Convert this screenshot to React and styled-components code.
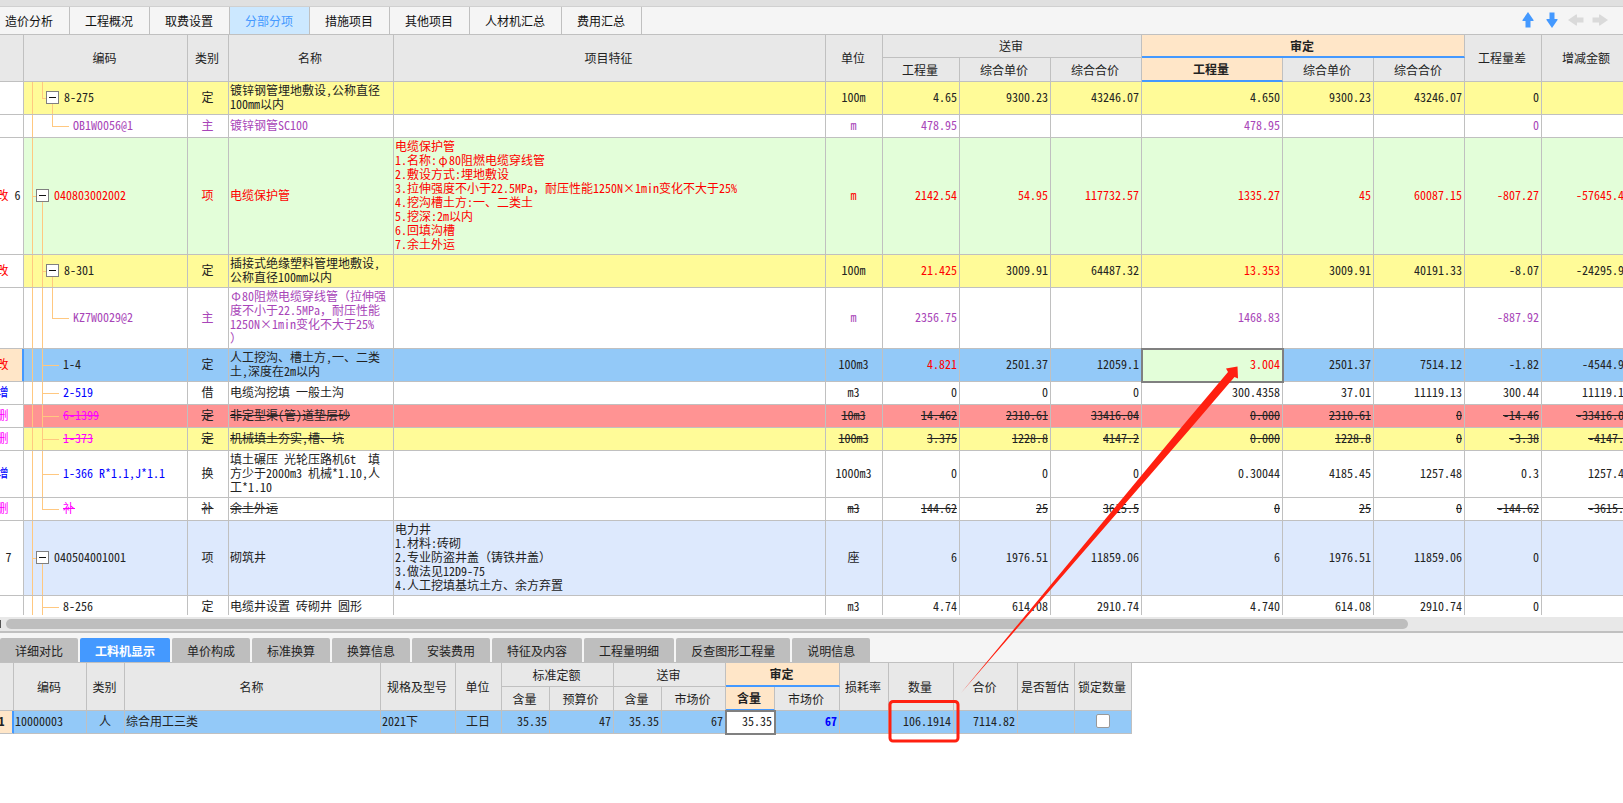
import React from 'react';
import styled, { createGlobalStyle, css } from 'styled-components';

const LINE = '#c0c0c0';
const GUIDE = '#ffc880';
const BLUE = '#4499ff';

const GlobalStyle = createGlobalStyle`
  * {
    box-sizing: border-box;
  }
  body {
    margin: 0;
    background: white;
    color: #222;
    font-family: 'Noto Sans CJK SC', sans-serif;
    font-size: 12px;
    overflow: hidden;
  }
`;

const Page = styled.div`
  display: flex;
  flex-direction: column;
  height: 100vh;
  position: relative;
  overflow: hidden;
`;

const TopStrip = styled.div`
  height: 7px;
  flex: none;
  background: #e0e0e0;
  border-bottom: 1px solid #d0d0d0;
`;

const TabBar = styled.div`
  display: flex;
  flex: none;
  align-items: stretch;
  justify-content: space-between;
  height: 28px;
  background: #f5f5f5;
  border-bottom: 1px solid ${LINE};
`;

/* the strip is scrolled a little, so the first tab is cut */
const TopTabs = styled.nav`
  display: flex;
  margin-left: -10px;
`;

const TopTab = styled.button`
  border: 0;
  border-right: 1px solid ${LINE};
  padding: 0 16px 0 15px;
  background: ${({ $active }) => ($active ? '#cce8ff' : 'transparent')};
  color: ${({ $active }) => ($active ? BLUE : '#111')};
  font: inherit;
`;

const ArrowTools = styled.div`
  display: flex;
  align-items: center;
  gap: 8px;
  padding: 0 15px 1px 0;
`;

const ArrowButton = styled.button`
  display: flex;
  width: 16px;
  height: 16px;
  border: 0;
  padding: 0;
  background: none;
  color: ${({ disabled }) => (disabled ? '#dadada' : BLUE)};
  svg {
    transform: rotate(${({ $turn }) => $turn}deg);
  }
`;

const GridPane = styled.section`
  flex: 1;
  min-height: 0;
  overflow: hidden;
  border-bottom: 2px solid white;
`;

const Grid = styled.table`
  table-layout: fixed;
  border-collapse: separate;
  border-spacing: 0;
  font-family: 'Noto Sans Mono CJK SC', 'Noto Sans CJK SC', monospace;
  line-height: 14px;
`;

const MainGrid = styled(Grid)`
  width: calc(100% + 16px);
  margin-left: -6px;
`;

const DetailGrid = styled(Grid)`
  width: 1142px;
  margin-left: -10px;
`;

const Head = styled.th`
  height: ${({ $short }) => ($short ? 23 : 24)}px;
  padding: 0 2px 0 0;
  background: ${({ $current }) => ($current ? '#ffe6c8' : '#e8e8e8')};
  border-right: 1px solid ${LINE};
  border-bottom: ${({ $mark }) => ($mark ? `2px solid ${BLUE}` : `1px solid ${LINE}`)};
  font-weight: ${({ $current }) => ($current ? 700 : 400)};
  white-space: nowrap;
`;

const Row = styled.tr`
  background: ${({ $bg }) => $bg || 'white'};
  color: ${({ $color }) => $color || 'inherit'};
  td:not(:first-child) {
    text-decoration: ${({ $removed }) => ($removed ? 'line-through' : 'none')};
  }
`;

const Cell = styled.td`
  height: 23px;
  padding: 1px 2px 3px 1px;
  border-right: 1px solid ${LINE};
  border-bottom: 1px solid ${LINE};
  text-align: ${({ $align }) => $align || 'left'};
  white-space: pre;
  overflow: hidden;
  color: ${({ $color }) => $color || 'inherit'};
  font-weight: ${({ $bold }) => ($bold ? 700 : 400)};
  ${({ $editing }) =>
    $editing &&
    css`
      background: ${$editing};
      outline: 2px solid #808080;
      outline-offset: -1px;
    `}
`;

const Gutter = styled(Cell)`
  padding: 1px 0 3px;
  background: ${({ $selected }) => ($selected ? '#ffe6c8' : 'white')};
  box-shadow: ${({ $selected }) => ($selected ? `inset -1px 0 ${BLUE}` : 'none')};
  border-right-color: ${({ $selected }) => ($selected ? BLUE : LINE)};
  text-align: center;
`;

const Mark = styled.span`
  color: ${({ $color }) => $color};
`;

const RowNo = styled.span`
  color: #222;
`;

// greek letters take a full character cell
const WideGlyph = styled.span`
  display: inline-block;
  width: 12px;
  text-align: center;
`;

const vLine = (level, part) => {
  const y = part === 'bottom' ? '100%' : '0';
  const h = part === 'full' ? '100%' : '50%';
  return `linear-gradient(${GUIDE}, ${GUIDE}) ${8 + level * 10}px ${y} / 1px ${h} no-repeat`;
};

const hLine = (level, width) =>
  `linear-gradient(${GUIDE}, ${GUIDE}) ${8 + level * 10}px 50% / ${width}px 1px no-repeat`;

const TreeCell = styled(Cell)`
  background: ${({ $guides }) => $guides};
`;

const TreeNode = styled.div`
  display: flex;
  align-items: center;
  gap: 5px;
  padding-left: ${({ $indent }) => $indent}px;
`;

const Expander = styled.button`
  width: 13px;
  height: 13px;
  padding: 0;
  display: grid;
  place-items: center;
  background: white;
  border: 1px solid #808080;
  &::before {
    content: '';
    width: 7px;
    height: 1px;
    background: #111;
  }
`;

const ScrollBar = styled.div`
  flex: none;
  display: flex;
  align-items: center;
  gap: 5px;
  height: 16px;
  background: #e8e8e8;
  border-bottom: 2px solid ${LINE};
`;

const ScrollEnd = styled.span`
  width: 1px;
  height: 8px;
  background: #555;
`;

const ScrollThumb = styled.span`
  width: 86.4%;
  height: 10px;
  border-radius: 5px;
  background: #bebebe;
`;

const DetailPane = styled.section`
  flex: 0 0 170px;
  overflow: hidden;
`;

const DetailTabs = styled.nav`
  display: flex;
  align-items: flex-end;
  gap: 2px;
  height: 30px;
  background: #f5f5f5;
  border-bottom: 1px solid ${LINE};
`;

const DetailTab = styled.button`
  height: 24px;
  border: 0;
  border-radius: 2px 2px 0 0;
  padding: 0 15px;
  background: ${({ $active }) => ($active ? BLUE : '#bebebe')};
  color: ${({ $active }) => ($active ? 'white' : '#222')};
  font: inherit;
  font-weight: ${({ $active }) => ($active ? 700 : 400)};
`;

const CheckBox = styled.input`
  appearance: none;
  display: block;
  width: 14px;
  height: 14px;
  margin: 0 auto;
  background: white;
  border: 1px solid #999;
  border-radius: 2px;
`;

const Marks = styled.svg`
  position: absolute;
  left: 0;
  top: 0;
  pointer-events: none;
`;

const topTabs = [
  '造价分析', '工程概况', '取费设置', '分部分项', '措施项目', '其他项目', '人材机汇总', '费用汇总',
];

const detailTabs = [
  '详细对比', '工料机显示', '单价构成', '标准换算', '换算信息', '安装费用', '特征及内容', '工程量明细',
  '反查图形工程量', '说明信息',
];

const mainCols = [30, 164, 41, 165, null, 57, 77, 91, 91, 141, 91, 91, 77, 91];
const detailCols = [24, 73, 38, 256, 75, 46, 48, 64, 48, 64, 49, 65, 49, 65, 64, 57, 57];

const YELLOW = '#fffb98';
const PURPLE = '#a845b8';
const MAGENTA = '#ff00ff';

// guide lines of a direct child that has no children of its own
const leaf = [vLine(0, 'full'), vLine(1, 'full'), hLine(1, 17)].join(', ');
const lastLeaf = [vLine(0, 'full'), vLine(1, 'top'), hLine(1, 17)].join(', ');
const root = [vLine(0, 'full'), hLine(0, 5), vLine(1, 'bottom')].join(', ');

const rows = [
  {
    mark: '', code: '8-275', open: true, indent: 21, kind: '定', bg: YELLOW,
    guides: [vLine(0, 'full'), vLine(1, 'top'), hLine(1, 5), vLine(2, 'bottom')].join(', '),
    name: '镀锌钢管埋地敷设,公称直径\n100mm以内', unit: '100m',
    values: ['4.65', '9300.23', '43246.07', '4.650', '9300.23', '43246.07', '0', '0'],
  },
  {
    mark: '', code: 'OB1W0056@1', indent: 48, kind: '主', color: PURPLE,
    guides: [vLine(0, 'full'), vLine(2, 'top'), hLine(2, 17)].join(', '),
    name: '镀锌钢管SC100', unit: 'm',
    values: ['478.95', '', '', '478.95', '', '', '0', ''],
  },
  {
    mark: '改', no: ' 6', code: '040803002002', open: true, indent: 11, kind: '项', bg: '#e3fed9', color: 'red',
    guides: root,
    name: '电缆保护管', unit: 'm',
    feature:
      '电缆保护管\n1.名称:φ80阻燃电缆穿线管\n2.敷设方式:埋地敷设\n3.拉伸强度不小于22.5MPa，耐压性能1250N×1min变化不大于25%\n4.挖沟槽土方:一、二类土\n5.挖深:2m以内\n6.回填沟槽\n7.余土外运',
    values: ['2142.54', '54.95', '117732.57', '1335.27', '45', '60087.15', '-807.27', '-57645.42'],
  },
  {
    mark: '改', code: '8-301', open: true, indent: 21, kind: '定', bg: YELLOW, changed: true,
    guides: [vLine(0, 'full'), vLine(1, 'full'), hLine(1, 5), vLine(2, 'bottom')].join(', '),
    name: '插接式绝缘塑料管埋地敷设,\n公称直径100mm以内', unit: '100m',
    values: ['21.425', '3009.91', '64487.32', '13.353', '3009.91', '40191.33', '-8.07', '-24295.99'],
  },
  {
    mark: '', code: 'KZ7W0029@2', indent: 48, kind: '主', color: PURPLE,
    guides: [vLine(0, 'full'), vLine(1, 'full'), vLine(2, 'top'), hLine(2, 17)].join(', '),
    name: 'Φ80阻燃电缆穿线管（拉伸强\n度不小于22.5MPa，耐压性能\n1250N×1min变化不大于25%\n）', unit: 'm',
    values: ['2356.75', '', '', '1468.83', '', '', '-887.92', ''],
  },
  {
    mark: '改', code: '1-4', indent: 38, kind: '定', bg: '#93c9f8', changed: true, selected: true, guides: leaf,
    name: '人工挖沟、槽土方,一、二类\n土,深度在2m以内', unit: '100m3',
    values: ['4.821', '2501.37', '12059.1', '3.004', '2501.37', '7514.12', '-1.82', '-4544.98'],
  },
  {
    mark: '增', code: '2-519', indent: 38, kind: '借', markColor: 'blue', guides: leaf,
    name: '电缆沟挖填 一般土沟', unit: 'm3',
    values: ['0', '0', '0', '300.4358', '37.01', '11119.13', '300.44', '11119.13'],
  },
  {
    mark: '删', code: '6-1399', indent: 38, kind: '定', bg: '#ff9393', markColor: MAGENTA, removed: true, guides: leaf,
    name: '非定型渠(管)道垫层砂', unit: '10m3',
    values: ['14.462', '2310.61', '33416.04', '0.000', '2310.61', '0', '-14.46', '-33416.04'],
  },
  {
    mark: '删', code: '1-373', indent: 38, kind: '定', bg: YELLOW, markColor: MAGENTA, removed: true, guides: leaf,
    name: '机械填土夯实,槽、坑', unit: '100m3',
    values: ['3.375', '1228.8', '4147.2', '0.000', '1228.8', '0', '-3.38', '-4147.2'],
  },
  {
    mark: '增', code: '1-366 R*1.1,J*1.1', indent: 38, kind: '换', markColor: 'blue', guides: leaf,
    name: '填土碾压 光轮压路机6t  填\n方少于2000m3 机械*1.10,人\n工*1.10', unit: '1000m3',
    values: ['0', '0', '0', '0.30044', '4185.45', '1257.48', '0.3', '1257.48'],
  },
  {
    mark: '删', code: '补', indent: 38, kind: '补', markColor: MAGENTA, removed: true, guides: lastLeaf,
    name: '余土外运', unit: 'm3',
    values: ['144.62', '25', '3615.5', '0', '25', '0', '-144.62', '-3615.5'],
  },
  {
    mark: '', no: '7', code: '040504001001', open: true, indent: 11, kind: '项', bg: '#dde9fd', guides: root,
    name: '砌筑井', unit: '座',
    feature: '电力井\n1.材料:砖砌\n2.专业防盗井盖（铸铁井盖）\n3.做法见12D9-75\n4.人工挖填基坑土方、余方弃置',
    values: ['6', '1976.51', '11859.06', '6', '1976.51', '11859.06', '0', '0'],
  },
  {
    mark: '', code: '8-256', indent: 38, kind: '定', guides: leaf,
    name: '电缆井设置 砖砌井 圆形', unit: 'm3',
    values: ['4.74', '614.08', '2910.74', '4.740', '614.08', '2910.74', '0', '0'],
  },
];

function Cols({ widths }) {
  return (
    <colgroup>
      {widths.map((width, i) => (
        <col key={i} width={width || undefined} />
      ))}
    </colgroup>
  );
}

function ArrowIcon() {
  return (
    <svg width='16' height='16' viewBox='0 0 16 16' fill='currentColor'>
      <path d='M8 0 L13.5 8 V9 H10.5 V15.5 H5.5 V9 H2.5 V8 Z' />
    </svg>
  );
}

function Description({ text = '' }) {
  return text
    .split(/([φΦ])/)
    .map((part, i) => (i % 2 ? <WideGlyph key={i}>{part}</WideGlyph> : part));
}

function MainRow({ row }) {
  return (
    <Row $bg={row.bg} $color={row.color} $removed={row.removed}>
      <Gutter $selected={row.selected}>
        {row.mark && <Mark $color={row.markColor || 'red'}>{row.mark}</Mark>}
        {row.no ? <RowNo>{row.no}</RowNo> : row.mark && '  '}
      </Gutter>
      <TreeCell $guides={row.guides} $color={row.markColor}>
        <TreeNode $indent={row.indent}>
          {row.open && <Expander aria-label='折叠' />}
          {row.code}
        </TreeNode>
      </TreeCell>
      <Cell $align='center'>{row.kind}</Cell>
      <Cell>
        <Description text={row.name} />
      </Cell>
      <Cell>
        <Description text={row.feature} />
      </Cell>
      <Cell $align='center'>{row.unit}</Cell>
      {row.values.map((value, i) => (
        <Cell
          key={i}
          $align='right'
          $color={row.changed && (i === 0 || i === 3) ? 'red' : undefined}
          $editing={row.selected && i === 3 ? '#e3fed9' : undefined}
        >
          {value}
        </Cell>
      ))}
    </Row>
  );
}

export default function App() {
  return (
    <Page>
      <GlobalStyle />
      <TopStrip />
      <TabBar>
        <TopTabs>
          {topTabs.map((tab) => (
            <TopTab key={tab} $active={tab === '分部分项'}>
              {tab}
            </TopTab>
          ))}
        </TopTabs>
        <ArrowTools>
          <ArrowButton aria-label='上移' $turn={0}>
            <ArrowIcon />
          </ArrowButton>
          <ArrowButton aria-label='下移' $turn={180}>
            <ArrowIcon />
          </ArrowButton>
          <ArrowButton aria-label='后退' $turn={-90} disabled>
            <ArrowIcon />
          </ArrowButton>
          <ArrowButton aria-label='前进' $turn={90} disabled>
            <ArrowIcon />
          </ArrowButton>
        </ArrowTools>
      </TabBar>

      <GridPane>
        <MainGrid>
          <Cols widths={mainCols} />
          <thead>
            <tr>
              <Head rowSpan={2} />
              <Head rowSpan={2}>编码</Head>
              <Head rowSpan={2}>类别</Head>
              <Head rowSpan={2}>名称</Head>
              <Head rowSpan={2}>项目特征</Head>
              <Head rowSpan={2}>单位</Head>
              <Head colSpan={3} $short>
                送审
              </Head>
              <Head colSpan={3} $short $current $mark>
                审定
              </Head>
              <Head rowSpan={2}>工程量差</Head>
              <Head rowSpan={2}>增减金额</Head>
            </tr>
            <tr>
              <Head>工程量</Head>
              <Head>综合单价</Head>
              <Head>综合合价</Head>
              <Head $current $mark>
                工程量
              </Head>
              <Head>综合单价</Head>
              <Head>综合合价</Head>
            </tr>
          </thead>
          <tbody>
            {rows.map((row) => (
              <MainRow key={row.code} row={row} />
            ))}
          </tbody>
        </MainGrid>
      </GridPane>

      <ScrollBar>
        <ScrollEnd />
        <ScrollThumb />
      </ScrollBar>

      <DetailPane>
        <DetailTabs>
          {detailTabs.map((tab) => (
            <DetailTab key={tab} $active={tab === '工料机显示'}>
              {tab}
            </DetailTab>
          ))}
        </DetailTabs>
        <DetailGrid>
          <Cols widths={detailCols} />
          <thead>
            <tr>
              <Head rowSpan={2} />
              <Head rowSpan={2}>编码</Head>
              <Head rowSpan={2}>类别</Head>
              <Head rowSpan={2}>名称</Head>
              <Head rowSpan={2}>规格及型号</Head>
              <Head rowSpan={2}>单位</Head>
              <Head colSpan={2}>标准定额</Head>
              <Head colSpan={2}>送审</Head>
              <Head colSpan={2} $current $mark>
                审定
              </Head>
              <Head rowSpan={2}>损耗率</Head>
              <Head rowSpan={2}>数量</Head>
              <Head rowSpan={2}>合价</Head>
              <Head rowSpan={2}>是否暂估</Head>
              <Head rowSpan={2}>锁定数量</Head>
            </tr>
            <tr>
              <Head>含量</Head>
              <Head>预算价</Head>
              <Head>含量</Head>
              <Head>市场价</Head>
              <Head $current $mark>
                含量
              </Head>
              <Head>市场价</Head>
            </tr>
          </thead>
          <tbody>
            <Row $bg='#93c9f8'>
              <Gutter $selected $bold>
                1
              </Gutter>
              <Cell>10000003</Cell>
              <Cell $align='center'>人</Cell>
              <Cell>综合用工三类</Cell>
              <Cell>2021下</Cell>
              <Cell $align='center'>工日</Cell>
              <Cell $align='right'>35.35</Cell>
              <Cell $align='right'>47</Cell>
              <Cell $align='right'>35.35</Cell>
              <Cell $align='right'>67</Cell>
              <Cell $align='right' $editing='white'>
                35.35
              </Cell>
              <Cell $align='right' $color='blue' $bold>
                67
              </Cell>
              <Cell />
              <Cell $align='right'>106.1914</Cell>
              <Cell $align='right'>7114.82</Cell>
              <Cell />
              <Cell>
                <CheckBox type='checkbox' aria-label='锁定数量' />
              </Cell>
            </Row>
          </tbody>
        </DetailGrid>
      </DetailPane>

      <Marks width='1300' height='803' viewBox='0 0 1300 803' fill='none'>
        <rect x='890' y='701.5' width='68' height='39.5' rx='3' stroke='#ff2010' strokeWidth='3' />
        <path
          d='M961 693 L1180 429 L1228 372 L1226 368.5 L1237.5 366.5 L1238 378.5 L1234.5 377 L1190 429 L1111 520 Z'
          fill='#ff2010'
        />
      </Marks>
    </Page>
  );
}
